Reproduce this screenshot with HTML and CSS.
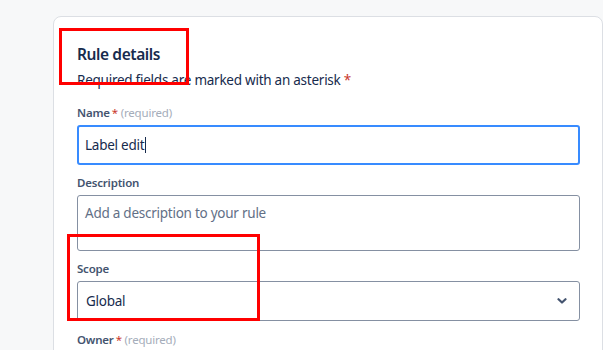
FILE: index.html
```html
<!DOCTYPE html>
<html>
<head>
<meta charset="utf-8">
<link rel="stylesheet" href="styles.css">
</head>
<body>
<div class="page">
  <div class="card">
    <h2 class="title">Rule details</h2>
    <p class="subtitle">Required fields are marked with an asterisk <span class="star">*</span></p>

    <div class="field field-first">
      <label class="label">Name<span class="star">*</span> <span class="req">(required)</span></label>
      <div class="input input-focus"><span class="value">Label edit</span><span class="caret"></span></div>
    </div>

    <div class="field">
      <label class="label">Description</label>
      <div class="textarea"><span class="placeholder">Add a description to your rule</span></div>
    </div>

    <div class="field">
      <label class="label">Scope</label>
      <div class="input select"><span class="value">Global</span>
        <svg class="chev" width="10" height="8" viewBox="0 0 10 8"><path d="M1.5 2.2 L5 5.5 L8.5 2.2" fill="none" stroke="#44546f" stroke-width="2.2" stroke-linecap="round" stroke-linejoin="round"/></svg>
      </div>
    </div>

    <div class="field field-last">
      <label class="label">Owner<span class="star">*</span> <span class="req">(required)</span></label>
    </div>
  </div>
  <div class="mark mark-1"></div>
  <div class="mark mark-2"></div>
</div>
</body>
</html>
```

FILE: styles.css
```css
html, body {
  margin: 0;
  padding: 0;
  background: #f7f8f9;
  font-family: "Noto Sans", "Open Sans", sans-serif;
  color: #172b4d;
  overflow: hidden;
}
.page {
  position: relative;
  width: 603px;
  height: 350px;
  padding: 16px 0 0 53px;
  box-sizing: border-box;
  overflow: hidden;
}
.card {
  background: #fff;
  border: 1px solid #dcdfe4;
  border-radius: 8px;
  width: 550px;
  box-sizing: border-box;
  padding: 27px 22px 0 23px;
  height: 360px;
}
.title {
  margin: 0;
  font-size: 15.5px;
  letter-spacing: -0.4px;
  line-height: 20px;
  font-weight: 600;
  color: #172b4d;
}
.subtitle {
  margin: 6px 0 0;
  font-size: 13.5px;
  letter-spacing: -0.25px;
  line-height: 20px;
  color: #172b4d;
}
.star {
  color: #c9372c;
}
.field {
  margin-top: 10px;
}
.field-first {
  margin-top: 15px;
}
.field-last {
  margin-top: 11px;
}
.label {
  display: block;
  font-size: 11.5px;
  letter-spacing: -0.2px;
  line-height: 16px;
  font-weight: 600;
  color: #44546f;
  margin-bottom: 4px;
}
.label .star {
  font-weight: 400;
  margin-left: 2px;
}
.req {
  font-weight: 400;
  color: #a5adba;
}
.input {
  height: 40px;
  box-sizing: border-box;
  border: 1px solid #8590a2;
  border-radius: 3px;
  display: flex;
  align-items: center;
  padding: 0 7px;
  font-size: 13.5px;
  letter-spacing: -0.25px;
}
.input-focus {
  border: 2px solid #388bff;
  padding: 0 6px;
}
.caret {
  display: inline-block;
  width: 1px;
  height: 16px;
  background: #172b4d;
  margin-left: 1px;
}
.textarea {
  height: 56px;
  box-sizing: border-box;
  border: 1px solid #8590a2;
  border-radius: 3px;
  padding: 7px 7px;
  font-size: 13.5px;
  letter-spacing: -0.25px;
  line-height: 20px;
}
.placeholder {
  color: #626f86;
}
.select {
  justify-content: space-between;
  padding: 0 12px 0 8px;
}
.chev {
  display: block;
}
.mark {
  position: absolute;
  border: 3px solid #ff0000;
  box-sizing: border-box;
}
.mark-1 {
  left: 59px;
  top: 28px;
  width: 130px;
  height: 57px;
}
.mark-2 {
  left: 67px;
  top: 234px;
  width: 193px;
  height: 87px;
}
```
